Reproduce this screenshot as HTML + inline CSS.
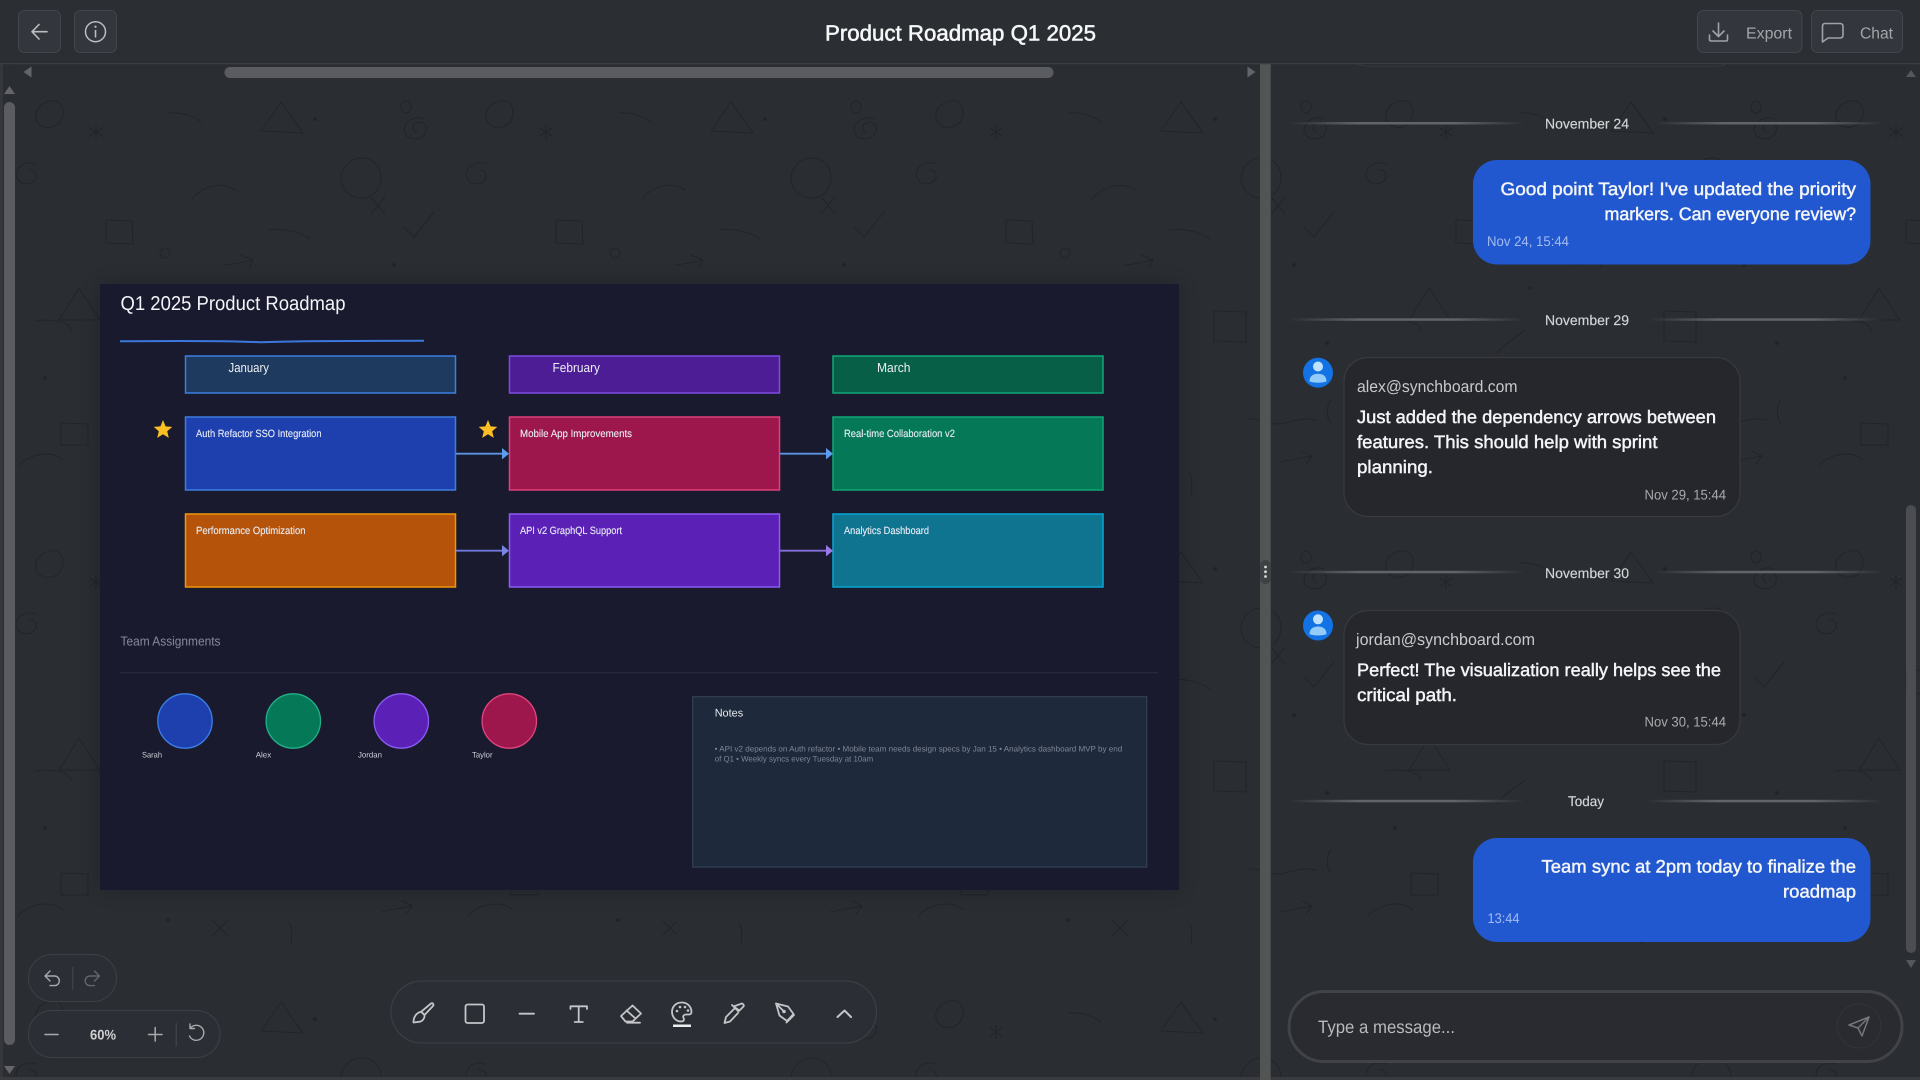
<!DOCTYPE html>
<html lang="en"><head><meta charset="utf-8"><title>Product Roadmap Q1 2025</title>
<style>
html,body{margin:0;padding:0;background:#2a2d32;width:1920px;height:1080px;overflow:hidden}
svg{display:block}
text{font-family:"Liberation Sans",sans-serif;text-rendering:geometricPrecision}
.m{font-size:18px;fill:#f4f5f7;stroke:#f4f5f7;stroke-width:.45}
.d{font-size:14px;fill:#d4d6d8;stroke:#d4d6d8;stroke-width:.15}
.e{font-size:16.5px;fill:#c8c9cb}
.t{font-size:14px;fill:#a9aaac}
.b{font-size:14px;fill:#a3bcf0}
.c{font-size:10.5px;fill:#e8ecf5;stroke:#e8ecf5;stroke-width:.12}
.h{font-size:13px;fill:#eef0f4}
.n{font-size:8px;fill:#cdd0d8}
.i{fill:none;stroke:#c4c5c8;stroke-width:1.800;stroke-linecap:round;stroke-linejoin:round}
</style></head><body>
<svg width="1920" height="1080" viewBox="0 0 1920 1080" xmlns="http://www.w3.org/2000/svg">
<defs>
<pattern id="dd" width="450" height="450" patternUnits="userSpaceOnUse" y="63">
<g transform="translate(0,-63)" fill="none" stroke="#222429" stroke-width="1.100" stroke-linecap="round" stroke-linejoin="round">
<path d="M36 118C34 106 48 99 56 101C65 104 65 118 58 124C50 130 38 128 36 118Z"/>
<path d="M96 125V139M90 128L102 136M102 128L90 136"/>
<path d="M169 113C180 112 194 116 201 122"/>
<path d="M281 102L261 131L303 133Z"/>
<circle cx="315" cy="119" r="1.500" fill="#222429"/>
<ellipse cx="406" cy="107" rx="5" ry="6"/>
<path d="M424 119C414 115 404 122 404 130C404 139 418 142 424 135C430 127 424 120 416 123C412 125 412 131 416 132"/>
<path d="M36 164C24 160 16 168 16 175C17 184 29 187 35 180C38 175 35 169 29 170"/>
<path d="M361 158C350 158 341 168 341 179C342 192 352 198 362 198C374 198 381 188 381 177C381 166 372 157 361 158Z"/>
<path d="M372 198L385 214M385 197L371 214"/>
<path d="M192 199C200 188 220 180 235 190"/>
<path d="M106 220L132 221L133 244L106 243Z"/>
<path d="M269 230C285 228 300 232 310 239"/>
<path d="M404 227L414 237L434 212"/>
<circle cx="165" cy="253" r="5"/>
<path d="M225 265C235 264 245 262 253 260M241 255L253 260L250 267"/>
<circle cx="394" cy="265" r="1.500" fill="#222429"/>
<path d="M79 288L59 320L100 320Z"/>
<path d="M35 321C48 319 70 320 71 331"/>
<circle cx="180" cy="288" r="1.300" fill="#222429"/>
<path d="M314 311L346 312L346 342L314 341Z"/>
<path d="M147 353L155 345L175 330"/>
<circle cx="427" cy="343" r="1.500" fill="#222429"/>
<circle cx="45" cy="378" r="1.500" fill="#222429"/>
<path d="M431 400C426 406 426 418 431 423"/>
<path d="M18 466C26 456 50 448 63 460"/>
<path d="M61 423L88 424L88 445L61 445Z"/>
<path d="M380 462C390 460 402 458 412 456M402 451L412 456L406 464"/>
<path d="M289 473C294 479 290 488 292 495"/>
<path d="M213 471L227 485M227 471L213 485"/>
<circle cx="168" cy="470" r="1.500" fill="#222429"/>
<path d="M347 420C358 416 365 424 378 424C390 424 398 416 416 420"/>
</g>
</pattern>
<linearGradient id="gl"><stop offset="0" stop-color="#62646a" stop-opacity="0"/><stop offset=".3" stop-color="#62646a"/><stop offset=".7" stop-color="#62646a"/><stop offset="1" stop-color="#62646a" stop-opacity="0"/></linearGradient>
<filter id="sh" x="-5%" y="-5%" width="110%" height="110%"><feGaussianBlur stdDeviation="10"/></filter>
<clipPath id="topc"><rect x="1271" y="63" width="640" height="20"/></clipPath>
</defs>

<rect width="1920" height="1080" fill="#2a2d32"/>
<rect y="63" width="1920" height="1017" fill="url(#dd)"/>

<!-- left edge and bottom -->
<rect x="0" y="63" width="3" height="1017" fill="#35373b"/>
<rect x="0" y="1077" width="1920" height="3" fill="#393b3f"/>

<!-- scrollbars left -->
<rect x="224.500" y="67" width="829" height="11" rx="5.500" fill="#5a5c62"/>
<path d="M23.500 72L31.500 66.500V77.500ZM1255.500 72L1247.500 66.500V77.500Z" fill="#63656a"/>
<rect x="4" y="102" width="11" height="943" rx="5.500" fill="#5a5c62"/>
<path d="M9.500 86L15 94H4ZM9.500 1074L4 1066H15Z" fill="#63656a"/>

<!-- whiteboard -->
<rect x="100" y="284" width="1079" height="606" fill="#000" opacity=".22" filter="url(#sh)"/>
<rect x="100" y="284" width="1079" height="606" fill="#1a1a2e"/>
<text x="120.500" y="310" font-size="20" fill="#f4f5f8" textLength="225" lengthAdjust="spacingAndGlyphs">Q1 2025 Product Roadmap</text>
<path d="M120 341.300C170 340.800 230 340.800 261 342.300C300 340.500 370 341 424 340.800" fill="none" stroke="#3b78dc" stroke-width="2"/>

<g stroke-width="1.500">
<rect x="185.500" y="356" width="270" height="37" fill="#1e3a5f" stroke="#3b7fe0"/>
<rect x="509.500" y="356" width="270" height="37" fill="#4c1d95" stroke="#7c4be0"/>
<rect x="833" y="356" width="270" height="37" fill="#065f46" stroke="#10a878"/>
<rect x="185.500" y="417" width="270" height="73" fill="#1e40af" stroke="#3b7fe0"/>
<rect x="509.500" y="417" width="270" height="73" fill="#9d174d" stroke="#e0407a"/>
<rect x="833" y="417" width="270" height="73" fill="#047857" stroke="#10a878"/>
<rect x="185.500" y="514" width="270" height="73" fill="#b45309" stroke="#f0980b"/>
<rect x="509.500" y="514" width="270" height="73" fill="#5b21b6" stroke="#8b5cf6"/>
<rect x="833" y="514" width="270" height="73" fill="#0e7490" stroke="#06a6d4"/>
</g>
<text class="h" x="228.500" y="372" textLength="40.500" lengthAdjust="spacingAndGlyphs">January</text>
<text class="h" x="552.500" y="372" textLength="47.500" lengthAdjust="spacingAndGlyphs">February</text>
<text class="h" x="877" y="372" textLength="33.500" lengthAdjust="spacingAndGlyphs">March</text>
<text class="c" x="196" y="437" textLength="125.500" lengthAdjust="spacingAndGlyphs">Auth Refactor SSO Integration</text>
<text class="c" x="520" y="437" textLength="112" lengthAdjust="spacingAndGlyphs">Mobile App Improvements</text>
<text class="c" x="844" y="437" textLength="111" lengthAdjust="spacingAndGlyphs">Real-time Collaboration v2</text>
<text class="c" x="196" y="534" textLength="109.500" lengthAdjust="spacingAndGlyphs">Performance Optimization</text>
<text class="c" x="520" y="534" textLength="102" lengthAdjust="spacingAndGlyphs">API v2 GraphQL Support</text>
<text class="c" x="844" y="534" textLength="85" lengthAdjust="spacingAndGlyphs">Analytics Dashboard</text>

<path d="M163 420L165.600 426.400L172.300 426.900L167.200 431.200L168.800 437.900L163 434.200L157.200 437.900L158.800 431.200L153.700 426.900L160.400 426.400Z" fill="#fbbf24"/>
<path d="M488 420L490.600 426.400L497.300 426.900L492.200 431.200L493.800 437.900L488 434.200L482.200 437.900L483.800 431.200L478.700 426.900L485.400 426.400Z" fill="#fbbf24"/>

<path d="M456 453.700H503" stroke="#5d94e2" stroke-width="1.800"/><path d="M502 448L509 453.700L502 459.400Z" fill="#5d9df0"/>
<path d="M780 453.700H827" stroke="#5d94e2" stroke-width="1.800"/><path d="M826 448L833 453.700L826 459.400Z" fill="#5d9df0"/>
<path d="M456 550.700H503" stroke="#6f78d8" stroke-width="1.800"/><path d="M502 545L509 550.700L502 556.400Z" fill="#7a84e4"/>
<path d="M780 550.700H827" stroke="#8570dc" stroke-width="1.800"/><path d="M826 545L833 550.700L826 556.400Z" fill="#9a78ea"/>

<text x="120.500" y="645.500" font-size="13" fill="#878a9b" textLength="100" lengthAdjust="spacingAndGlyphs">Team Assignments</text>
<rect x="120" y="672" width="1038" height="1.300" fill="#25273c"/>

<g stroke-width="1.300">
<circle cx="185" cy="721" r="27.200" fill="#1e40af" stroke="#3b7fe8"/>
<circle cx="293.300" cy="721" r="27.200" fill="#047857" stroke="#22b088"/>
<circle cx="401.300" cy="721" r="27.200" fill="#5b21b6" stroke="#8b5cf6"/>
<circle cx="509.300" cy="721" r="27.200" fill="#9d174d" stroke="#e0457f"/>
</g>
<text class="n" x="142" y="757.500" textLength="20" lengthAdjust="spacingAndGlyphs">Sarah</text>
<text class="n" x="255.700" y="757.500" textLength="15.500" lengthAdjust="spacingAndGlyphs">Alex</text>
<text class="n" x="358" y="757.500" textLength="24" lengthAdjust="spacingAndGlyphs">Jordan</text>
<text class="n" x="472" y="757.500" textLength="20.500" lengthAdjust="spacingAndGlyphs">Taylor</text>

<rect x="692.700" y="696.700" width="454" height="170.300" fill="#1e293b" stroke="#334155" stroke-width="1.200"/>
<text x="714.700" y="716.700" font-size="11" fill="#e8eaee" textLength="28.500" lengthAdjust="spacingAndGlyphs">Notes</text>
<text x="714.700" y="751.700" font-size="8" fill="#7f8796" textLength="407.500" lengthAdjust="spacingAndGlyphs">• API v2 depends on Auth refactor • Mobile team needs design specs by Jan 15 • Analytics dashboard MVP by end</text>
<text x="714.700" y="761.700" font-size="8" fill="#7f8796" textLength="158.500" lengthAdjust="spacingAndGlyphs">of Q1 • Weekly syncs every Tuesday at 10am</text>

<!-- canvas controls -->
<rect x="28.500" y="954.500" width="88" height="47" rx="23.500" fill="#2b2e34" stroke="#3b3e44" stroke-width="1.200"/>
<rect x="28.500" y="1010.500" width="191.500" height="47" rx="23.500" fill="#2b2e34" stroke="#3b3e44" stroke-width="1.200"/>
<path d="M50 971L45 976L50 981M45 976H54.500A4.800 4.800 0 0 1 54.500 985.600H50" fill="none" stroke="#a8a9ac" stroke-width="1.400" stroke-linecap="round" stroke-linejoin="round"/>
<path d="M94.500 971L99.500 976L94.500 981M99.500 976H90A4.800 4.800 0 0 0 90 985.600H94.500" fill="none" stroke="#64666a" stroke-width="1.400" stroke-linecap="round" stroke-linejoin="round"/>
<rect x="72.300" y="967" width="1" height="23" fill="#46484d"/>
<path d="M45 1034.500H58M148.500 1034.500H162M155.200 1027.500V1041" stroke="#a8a9ac" stroke-width="1.500" stroke-linecap="round"/>
<text x="90" y="1039.500" font-size="14" font-weight="bold" fill="#cfd0d2" textLength="26" lengthAdjust="spacingAndGlyphs">60%</text>
<rect x="175.700" y="1023" width="1" height="23" fill="#46484d"/>
<path d="M190.500 1028A7.500 7.500 0 1 1 189.500 1036M190 1024V1028.500H194.500" fill="none" stroke="#a8a9ac" stroke-width="1.400" stroke-linecap="round" stroke-linejoin="round"/>

<!-- toolbar -->
<rect x="391" y="981" width="485.500" height="62" rx="31" fill="#2b2e34" stroke="#3b3e46" stroke-width="1.200"/>
<g class="i">
<g transform="translate(423,1013)"><path d="M8 -9.500C10 -10.500 11 -8.500 10 -7L1.500 2L-1.800 -1.300Z"/><path d="M-1.800 -1.300L1.500 2C2 5 -0.500 8.500 -4 8.800L-9.500 9.500C-9.800 6 -8 0 -1.800 -1.300Z"/></g>
<rect x="465.500" y="1004.500" width="18.500" height="18.500" rx="2"/>
<path d="M519.500 1013.700H534"/>
<path d="M570.500 1009V1006.300H587V1009M578.700 1006.300V1022M574.700 1022H582.800"/>
<path d="M621 1016L632.500 1005.500L641 1013.500L632.500 1021.500H625.500ZM626.500 1010.500L635.500 1018.500M627 1022.700H640"/>
<path d="M681.700 1002.500C675.500 1002.500 672 1007 672 1012C672 1017 676 1021.500 681 1021.500C684 1021.500 684.500 1019.500 683.500 1018C682.500 1016 684 1014.500 686 1014.500H689C691 1014.500 691.500 1013 691.500 1011.500C691 1006 687 1002.500 681.700 1002.500Z"/>
<path d="M738.500 1011.500L732 1005M741 1003.800C742.500 1003 744.500 1005 743.500 1006.500L739.500 1010.500L733.500 1006.500ZM734.500 1008.500L726 1017L724.500 1023L730 1021.500L738 1013"/>
<path d="M776 1003.500L788 1006.500L793.500 1014L787 1021L779.500 1015.500ZM776 1003.500L784 1011.500M786.500 1022.500L794 1015"/>
<path d="M837.500 1017L844.500 1010.500L851 1017" stroke-width="2"/>
</g>
<g fill="#c4c5c8"><circle cx="677" cy="1011" r="1.300"/><circle cx="680" cy="1007" r="1.300"/><circle cx="685" cy="1007" r="1.300"/><circle cx="688" cy="1010.500" r="1.300"/><circle cx="784" cy="1011.500" r="1.800"/></g>
<rect x="673" y="1024.500" width="18" height="2.500" fill="#eceded"/>

<!-- resizer -->
<rect x="1260" y="63" width="10.700" height="1017" fill="#525554"/>
<rect x="1260" y="560" width="11" height="24" rx="5.500" fill="#3f4144"/>
<g fill="#d6d7d8"><circle cx="1265.500" cy="567" r="1.400"/><circle cx="1265.500" cy="571.800" r="1.400"/><circle cx="1265.500" cy="576.500" r="1.400"/></g>

<!-- right scrollbar -->
<rect x="1906" y="505" width="10" height="448" rx="5" fill="#4b4d52"/>
<path d="M1911 70L1916 77H1906ZM1911 968L1906 960H1916Z" fill="#55575b"/>

<!-- chat -->
<rect x="1344" y="20" width="396" height="46" rx="24" fill="#26272c" stroke="#383a3f" clip-path="url(#topc)"/>

<rect x="1288" y="122" width="237" height="2.500" fill="url(#gl)"/><rect x="1655" y="122" width="229" height="2.500" fill="url(#gl)"/>
<text class="d" x="1545" y="128.500" textLength="84" lengthAdjust="spacingAndGlyphs">November 24</text>

<rect x="1473" y="160" width="397.500" height="104.500" rx="24" fill="#2258cf"/>
<text class="m" x="1500.500" y="195" textLength="355.500" lengthAdjust="spacingAndGlyphs">Good point Taylor! I've updated the priority</text>
<text class="m" x="1604.500" y="220" textLength="251.500" lengthAdjust="spacingAndGlyphs">markers. Can everyone review?</text>
<text class="b" x="1487" y="246" textLength="82" lengthAdjust="spacingAndGlyphs">Nov 24, 15:44</text>

<rect x="1288" y="318.300" width="237" height="2.500" fill="url(#gl)"/><rect x="1648" y="318.300" width="236" height="2.500" fill="url(#gl)"/>
<text class="d" x="1545" y="325" textLength="84" lengthAdjust="spacingAndGlyphs">November 29</text>

<circle cx="1318" cy="372.700" r="15" fill="#1372e4"/>
<circle cx="1318" cy="366.500" r="5" fill="#bfe3ff"/>
<path d="M1309.500 381.500C1309.500 376 1313 373.700 1318 373.700C1323 373.700 1326.500 376 1326.500 381.500Q1318 384 1309.500 381.500Z" fill="#93cbfa"/>
<rect x="1344" y="357.500" width="396" height="159" rx="24" fill="#26272c" stroke="#383a3f" stroke-width="1.200"/>
<text class="e" x="1357" y="392" textLength="160.500" lengthAdjust="spacingAndGlyphs">alex@synchboard.com</text>
<text class="m" x="1357" y="423" textLength="359" lengthAdjust="spacingAndGlyphs">Just added the dependency arrows between</text>
<text class="m" x="1357" y="448" textLength="300.500" lengthAdjust="spacingAndGlyphs">features. This should help with sprint</text>
<text class="m" x="1357" y="473" textLength="76" lengthAdjust="spacingAndGlyphs">planning.</text>
<text class="t" x="1644.500" y="499.500" textLength="81.500" lengthAdjust="spacingAndGlyphs">Nov 29, 15:44</text>

<rect x="1288" y="570.800" width="237" height="2.500" fill="url(#gl)"/><rect x="1655" y="570.800" width="229" height="2.500" fill="url(#gl)"/>
<text class="d" x="1545" y="578" textLength="84" lengthAdjust="spacingAndGlyphs">November 30</text>

<circle cx="1318" cy="625.500" r="15" fill="#1372e4"/>
<circle cx="1318" cy="619.300" r="5" fill="#bfe3ff"/>
<path d="M1309.500 634.300C1309.500 628.800 1313 626.500 1318 626.500C1323 626.500 1326.500 628.800 1326.500 634.300Q1318 636.800 1309.500 634.300Z" fill="#93cbfa"/>
<rect x="1344" y="610.500" width="396" height="134" rx="24" fill="#26272c" stroke="#383a3f" stroke-width="1.200"/>
<text class="e" x="1356" y="645" textLength="179" lengthAdjust="spacingAndGlyphs">jordan@synchboard.com</text>
<text class="m" x="1357" y="676" textLength="364" lengthAdjust="spacingAndGlyphs">Perfect! The visualization really helps see the</text>
<text class="m" x="1357" y="701" textLength="100" lengthAdjust="spacingAndGlyphs">critical path.</text>
<text class="t" x="1644.500" y="726.500" textLength="81.500" lengthAdjust="spacingAndGlyphs">Nov 30, 15:44</text>

<rect x="1288" y="799.800" width="237" height="2.500" fill="url(#gl)"/><rect x="1645" y="799.800" width="239" height="2.500" fill="url(#gl)"/>
<text class="d" x="1568" y="806" textLength="36" lengthAdjust="spacingAndGlyphs">Today</text>

<rect x="1473" y="838" width="397.500" height="104" rx="24" fill="#2258cf"/>
<text class="m" x="1541.500" y="872.500" textLength="314.500" lengthAdjust="spacingAndGlyphs">Team sync at 2pm today to finalize the</text>
<text class="m" x="1783" y="897.500" textLength="73" lengthAdjust="spacingAndGlyphs">roadmap</text>
<text class="b" x="1487.500" y="923" textLength="32" lengthAdjust="spacingAndGlyphs">13:44</text>

<!-- input -->
<rect x="1289" y="991.500" width="613" height="70" rx="35" fill="#292b30" stroke="#414347" stroke-width="3"/>
<text x="1318" y="1033" font-size="18" fill="#b9babc" textLength="137" lengthAdjust="spacingAndGlyphs">Type a message...</text>
<circle cx="1859" cy="1026" r="22" fill="#292b30" stroke="#323438" stroke-width="1"/>
<path d="M1869 1017L1849 1025L1858 1028L1862 1036ZM1858 1028L1869 1017" fill="none" stroke="#74767a" stroke-width="1.500" stroke-linejoin="round"/>

<!-- header -->
<rect width="1920" height="63" fill="#2b2e33"/>
<rect y="63" width="1920" height="1.300" fill="#3b3d42"/>
<rect x="18.500" y="10.500" width="42" height="42" rx="6" fill="#33363c" stroke="#43464c"/>
<rect x="74.500" y="10.500" width="42" height="42" rx="6" fill="#33363c" stroke="#43464c"/>
<path d="M47 31.700H32.500M39 24.500L32 31.700L39 39" fill="none" stroke="#bcbdc0" stroke-width="1.600" stroke-linecap="round" stroke-linejoin="round"/>
<circle cx="95.500" cy="31.700" r="10" fill="none" stroke="#bcbdc0" stroke-width="1.500"/>
<rect x="94.700" y="30" width="1.600" height="7.500" fill="#bcbdc0"/><circle cx="95.500" cy="26.700" r="1.100" fill="#bcbdc0"/>
<text x="825" y="40.500" font-size="22" fill="#f6f7f8" stroke="#f6f7f8" stroke-width=".55" textLength="271" lengthAdjust="spacingAndGlyphs">Product Roadmap Q1 2025</text>
<rect x="1697.500" y="10.500" width="104.500" height="42" rx="6" fill="#33363c" stroke="#43464c"/>
<rect x="1811.500" y="10.500" width="91" height="42" rx="6" fill="#33363c" stroke="#43464c"/>
<path d="M1718.500 23V36M1713 31L1718.500 36.500L1724 31M1709.500 35V39.500Q1709.500 41 1711 41H1726Q1727.500 41 1727.500 39.500V35" fill="none" stroke="#a0a2a6" stroke-width="1.600" stroke-linecap="round" stroke-linejoin="round"/>
<path d="M1825 23.500H1840Q1843 23.500 1843 26.500V35Q1843 38 1840 38H1828L1822.500 42V26.500Q1822.500 23.500 1825 23.500Z" fill="none" stroke="#a0a2a6" stroke-width="1.600" stroke-linejoin="round"/>
<text x="1746" y="38.500" font-size="16" fill="#a3a5a9" textLength="46" lengthAdjust="spacingAndGlyphs">Export</text>
<text x="1860" y="38.500" font-size="16" fill="#a3a5a9" textLength="33" lengthAdjust="spacingAndGlyphs">Chat</text>
</svg>
</body></html>
